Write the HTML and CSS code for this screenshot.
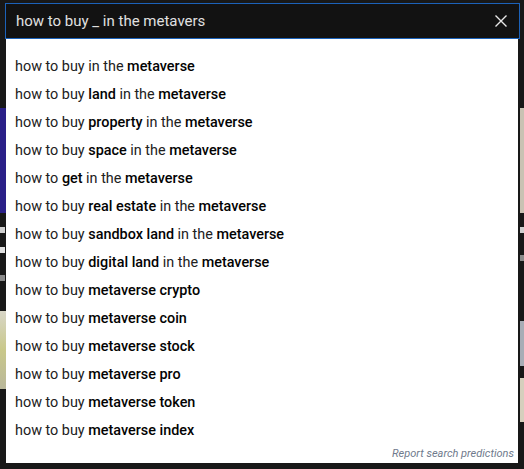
FILE: index.html
```html
<!DOCTYPE html>
<html>
<head>
<meta charset="utf-8">
<link rel="stylesheet" href="styles.css">
</head>
<body>
<div class="page">
  <div class="edge edge-left">
    <div class="thumb thumb-purple"></div>
    <div class="frag frag-a"></div>
    <div class="frag frag-b"></div>
    <div class="frag frag-c"></div>
    <div class="thumb thumb-photo"></div>
  </div>
  <div class="edge edge-right">
    <div class="thumb thumb-beige"></div>
    <div class="frag frag-a"></div>
    <div class="frag frag-c"></div>
    <div class="thumb thumb-blue"></div>
    <div class="thumb thumb-sand"></div>
  </div>
</div>
<div class="search">
  <div class="searchbar">
    <span class="query">how to buy _ in the metavers</span>
    <svg class="close" width="14" height="14" viewBox="0 0 14 14"><path d="M1.5 1.5 L12.5 12.5 M12.5 1.5 L1.5 12.5" stroke="#e8e8e8" stroke-width="1.4" fill="none"/></svg>
  </div>
  <div class="dropdown">
    <ul class="list">
      <li>how to buy in the <b>metaverse</b></li>
      <li>how to buy <b>land</b> in the <b>metaverse</b></li>
      <li>how to buy <b>property</b> in the <b>metaverse</b></li>
      <li>how to buy <b>space</b> in the <b>metaverse</b></li>
      <li>how to <b>get</b> in the <b>metaverse</b></li>
      <li>how to buy <b>real estate</b> in the <b>metaverse</b></li>
      <li>how to buy <b>sandbox land</b> in the <b>metaverse</b></li>
      <li>how to buy <b>digital land</b> in the <b>metaverse</b></li>
      <li>how to buy <b>metaverse crypto</b></li>
      <li>how to buy <b>metaverse coin</b></li>
      <li>how to buy <b>metaverse stock</b></li>
      <li>how to buy <b>metaverse pro</b></li>
      <li>how to buy <b>metaverse token</b></li>
      <li>how to buy <b>metaverse index</b></li>
    </ul>
    <div class="report">Report search predictions</div>
  </div>
</div>
</body>
</html>
```

FILE: styles.css
```css
html, body {
  margin: 0;
  padding: 0;
}
body {
  width: 524px;
  height: 469px;
  background: #181818;
  font-family: Roboto, "Liberation Sans", Arial, sans-serif;
  position: relative;
  overflow: hidden;
}
.page {
  display: flex;
  justify-content: space-between;
  height: 469px;
}
.edge {
  width: 6px;
  display: flex;
  flex-direction: column;
  padding-top: 108px;
}
.edge-right {
  width: 4px;
}
.thumb {
  height: 105px;
}
.thumb-purple { background: #2a2088; }
.thumb-beige { background: #c9c2b3; }
.frag {
  height: 6px;
  margin-top: 14px;
  background: #cfcfcf;
  width: 5px;
}
.frag-b { background: #e0e0e0; }
.frag-c { background: #8a8a8a; margin-top: 22px; }
.thumb-photo {
  margin-top: 30px;
  height: 78px;
  background: linear-gradient(180deg, #d8d6c8, #c9c88a 50%, #b9b79a);
}
.thumb-blue {
  margin-top: 60px;
  height: 45px;
  background: #a8adb6;
}
.thumb-sand {
  margin-top: 12px;
  height: 44px;
  background: #d6cfbd;
}
.search {
  position: absolute;
  left: 5px;
  top: 3px;
  width: 515px;
}
.searchbar {
  height: 34px;
  background: #121212;
  border: 1px solid #1c62b9;
  display: flex;
  align-items: center;
  justify-content: space-between;
  padding: 0 11px 0 10px;
}
.query {
  color: #e0e0e0;
  font-size: 15px;
  font-weight: 400;
}
.close {
  display: block;
}
.dropdown {
  background: #ffffff;
  margin: 0 2px 0 1px;
  height: 424px;
  box-sizing: border-box;
  padding-top: 14px;
  display: flex;
  flex-direction: column;
}
.list {
  list-style: none;
  margin: 0;
  padding: 0;
}
.list li {
  height: 28px;
  line-height: 28px;
  padding-left: 9px;
  font-size: 14.4px;
  color: #212121;
}
.list b {
  font-weight: 500;
  color: #030303;
}
.report {
  margin-top: auto;
  align-self: flex-end;
  padding: 0 4px 3px 0;
  font-size: 11px;
  font-style: italic;
  color: #6f7a8c;
}
```
